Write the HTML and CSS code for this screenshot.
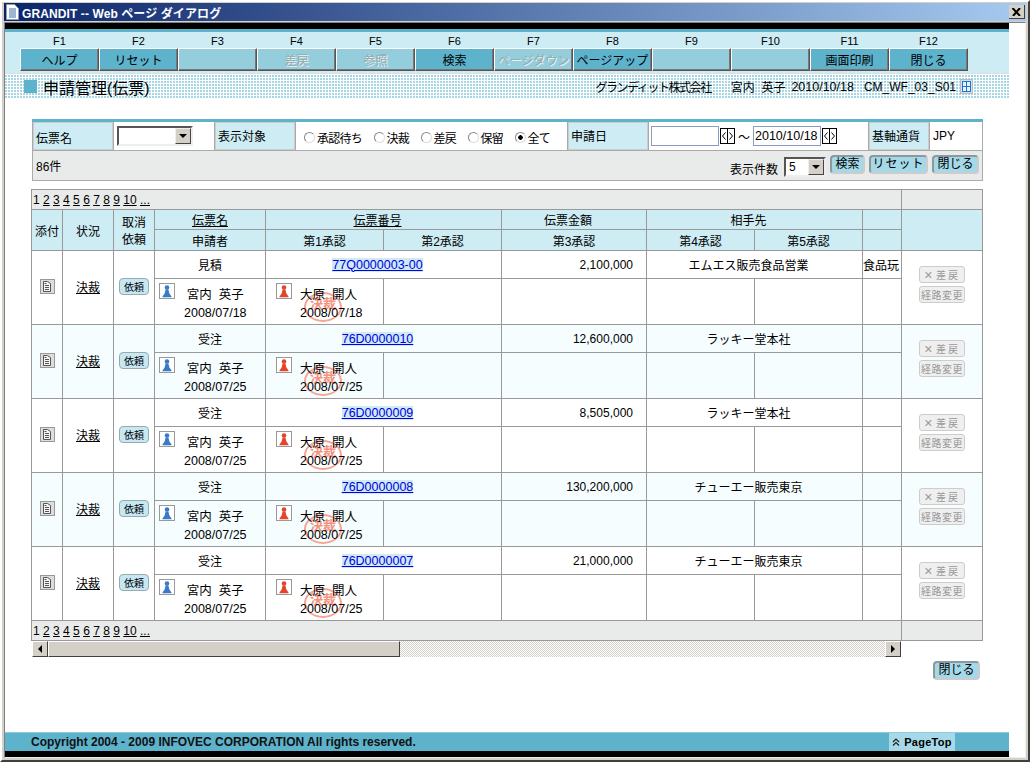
FILE: index.html
```html
<!DOCTYPE html>
<html>
<head>
<meta charset="utf-8">
<title>GRANDIT -- Web ページ ダイアログ</title>
<link rel="stylesheet" href="styles.css">
</head>
<body>
<svg class="defs" width="0" height="0">
  <symbol id="person" viewBox="0 0 16 16">
    <rect x=".5" y=".5" width="15" height="15" fill="#fff" stroke="#999"/>
    <circle cx="8" cy="4.500" r="2.300"/>
    <path d="M6.600 6.500h2.800l1 4 2.100 3v.7h-9v-.7l2.100-3z"/>
  </symbol>
  <symbol id="attach" viewBox="0 0 15 15">
    <rect x=".5" y=".5" width="14" height="14" fill="#ddd" stroke="#999"/>
    <path d="M3.500 2.500h4l3 2v8h-7z" fill="#f4f4f4" stroke="#555"/>
    <path d="M5 6.500h4M5 8.500h4M5 10.500h4M4.500 4.500h2" stroke="#555" fill="none"/>
  </symbol>
  <symbol id="spin" viewBox="0 0 15 16">
    <rect x=".5" y=".5" width="14" height="15" fill="#fff" stroke="#000"/>
    <path d="M7.500 0v16" stroke="#000"/>
    <path d="M5.500 4.500L2.500 8l3 3.500M9.500 4.500l3 3.500-3 3.500" fill="none" stroke="#000"/>
  </symbol>
</svg>

<div class="window">
  <div class="titlebar">
    <svg class="doc" width="13" height="16" viewBox="0 0 13 16">
      <path d="M.5.500h8l4 4v11H.5z" fill="#fff" stroke="#8a9ab8"/>
      <path d="M3 5h7M3 7h7M3 9h7M3 11h7M3 13h7" stroke="#3a6ea5"/>
    </svg>
    <span class="title">GRANDIT -- Web ページ ダイアログ</span>
    <span class="close-x">
      <svg width="9" height="8" viewBox="0 0 9 8"><path d="M.5 0l7.500 8M8 0L1 8" stroke="#000" stroke-width="2" fill="none"/></svg>
    </span>
  </div>

  <div class="client">
    <div class="page">
      <div class="strip"></div>

      <div class="fkeys">
        <div class="fkey"><span>F1</span><button>ヘルプ</button></div>
        <div class="fkey"><span>F2</span><button>リセット</button></div>
        <div class="fkey"><span>F3</span><button class="off"></button></div>
        <div class="fkey"><span>F4</span><button class="off">差戻</button></div>
        <div class="fkey"><span>F5</span><button class="off">参照</button></div>
        <div class="fkey"><span>F6</span><button>検索</button></div>
        <div class="fkey"><span>F7</span><button class="off">ページダウン</button></div>
        <div class="fkey"><span>F8</span><button>ページアップ</button></div>
        <div class="fkey"><span>F9</span><button class="off"></button></div>
        <div class="fkey"><span>F10</span><button class="off"></button></div>
        <div class="fkey"><span>F11</span><button>画面印刷</button></div>
        <div class="fkey"><span>F12</span><button>閉じる</button></div>
      </div>

      <div class="heading">
        <i class="mark"></i>
        <h1>申請管理(伝票)</h1>
        <div class="meta">
          <span class="co">グランディット株式会社</span>
          <span class="user">宮内&nbsp; 英子</span>
          <span class="day">2010/10/18</span>
          <span class="scr">CM_WF_03_S01</span>
          <span class="grid-ico"><i></i></span>
        </div>
      </div>

      <div class="main">
        <table class="filter">
          <colgroup>
            <col class="f1"><col class="f2"><col class="f3"><col class="f4">
            <col class="f5"><col class="f6"><col class="f7"><col class="f8">
          </colgroup>
          <tr class="cond">
            <th class="low">伝票名</th>
            <td><span class="combo wide"><b></b></span></td>
            <th>表示対象</th>
            <td>
              <div class="radios">
                <label><input type="radio" name="t">承認待ち</label>
                <label><input type="radio" name="t">決裁</label>
                <label><input type="radio" name="t">差戻</label>
                <label><input type="radio" name="t">保留</label>
                <label><input type="radio" name="t" checked>全て</label>
              </div>
            </td>
            <th>申請日</th>
            <td>
              <div class="dates">
                <input class="date" type="text">
                <svg class="spin"><use href="#spin"/></svg>
                <span class="tilde">～</span>
                <input class="date" type="text" value="2010/10/18">
                <svg class="spin"><use href="#spin"/></svg>
              </div>
            </td>
            <th>基軸通貨</th>
            <td class="cur">JPY</td>
          </tr>
          <tr class="acts">
            <td colspan="8">
              <div class="actrow">
                <span class="count">86件</span>
                <span class="lbl">表示件数</span>
                <span class="combo small">5<b></b></span>
                <button class="btn">検索</button>
                <button class="btn spaced">リセット</button>
                <button class="btn">閉じる</button>
              </div>
            </td>
          </tr>
        </table>

        <table class="list">
          <colgroup>
            <col class="c1"><col class="c2"><col class="c3"><col class="c4"><col class="c5"><col class="c6">
            <col class="c7"><col class="c8"><col class="c9"><col class="c10"><col class="c11">
          </colgroup>
          <tr class="pager">
            <td colspan="10">1 <a>2</a> <a>3</a> <a>4</a> <a>5</a> <a>6</a> <a>7</a> <a>8</a> <a>9</a> <a>10</a> <a>...</a></td>
            <td></td>
          </tr>
          <tr class="hd hd1">
            <th rowspan="2" class="left">添付</th>
            <th rowspan="2">状況</th>
            <th rowspan="2">取消<br>依頼</th>
            <th><a>伝票名</a></th>
            <th colspan="2" class="pr"><a>伝票番号</a></th>
            <th class="pr">伝票金額</th>
            <th colspan="2" class="pr">相手先</th>
            <th></th>
            <th rowspan="2"></th>
          </tr>
          <tr class="hd hd2">
            <th>申請者</th><th>第1承認</th><th>第2承認</th><th>第3承認</th><th>第4承認</th><th>第5承認</th><th></th>
          </tr>

          <tr class="r1">
            <td rowspan="2" class="mid"><svg class="att"><use href="#attach"/></svg></td>
            <td rowspan="2" class="mid"><a class="state">決裁</a></td>
            <td rowspan="2" class="mid"><button class="req">依頼</button></td>
            <td>見積</td>
            <td colspan="2" class="pr"><a class="no">77Q0000003-00</a></td>
            <td class="amt">2,100,000</td>
            <td colspan="2" class="pr">エムエス販売食品営業</td>
            <td class="clip">食品玩</td>
            <td rowspan="2" class="ops"><button class="gray"><i>×</i><u>差戻</u></button><button class="gray">経路変更</button></td>
          </tr>
          <tr class="r2">
            <td class="who"><div><svg class="blue"><use href="#person"/></svg><p>宮内&nbsp; 英子<br>2008/07/18</p></div></td>
            <td class="who ok"><div><svg class="red"><use href="#person"/></svg><em class="stamp">決裁</em><p>大原&nbsp; 開人<br>2008/07/18</p></div></td>
            <td></td><td></td><td></td><td></td><td></td>
          </tr>

          <tr class="r1 alt">
            <td rowspan="2" class="mid"><svg class="att"><use href="#attach"/></svg></td>
            <td rowspan="2" class="mid"><a class="state">決裁</a></td>
            <td rowspan="2" class="mid"><button class="req">依頼</button></td>
            <td>受注</td>
            <td colspan="2" class="pr"><a class="no">76D0000010</a></td>
            <td class="amt">12,600,000</td>
            <td colspan="2" class="pr">ラッキー堂本社</td>
            <td class="clip"></td>
            <td rowspan="2" class="ops"><button class="gray"><i>×</i><u>差戻</u></button><button class="gray">経路変更</button></td>
          </tr>
          <tr class="r2 alt">
            <td class="who"><div><svg class="blue"><use href="#person"/></svg><p>宮内&nbsp; 英子<br>2008/07/25</p></div></td>
            <td class="who ok"><div><svg class="red"><use href="#person"/></svg><em class="stamp">決裁</em><p>大原&nbsp; 開人<br>2008/07/25</p></div></td>
            <td></td><td></td><td></td><td></td><td></td>
          </tr>

          <tr class="r1">
            <td rowspan="2" class="mid"><svg class="att"><use href="#attach"/></svg></td>
            <td rowspan="2" class="mid"><a class="state">決裁</a></td>
            <td rowspan="2" class="mid"><button class="req">依頼</button></td>
            <td>受注</td>
            <td colspan="2" class="pr"><a class="no">76D0000009</a></td>
            <td class="amt">8,505,000</td>
            <td colspan="2" class="pr">ラッキー堂本社</td>
            <td class="clip"></td>
            <td rowspan="2" class="ops"><button class="gray"><i>×</i><u>差戻</u></button><button class="gray">経路変更</button></td>
          </tr>
          <tr class="r2">
            <td class="who"><div><svg class="blue"><use href="#person"/></svg><p>宮内&nbsp; 英子<br>2008/07/25</p></div></td>
            <td class="who ok"><div><svg class="red"><use href="#person"/></svg><em class="stamp">決裁</em><p>大原&nbsp; 開人<br>2008/07/25</p></div></td>
            <td></td><td></td><td></td><td></td><td></td>
          </tr>

          <tr class="r1 alt">
            <td rowspan="2" class="mid"><svg class="att"><use href="#attach"/></svg></td>
            <td rowspan="2" class="mid"><a class="state">決裁</a></td>
            <td rowspan="2" class="mid"><button class="req">依頼</button></td>
            <td>受注</td>
            <td colspan="2" class="pr"><a class="no">76D0000008</a></td>
            <td class="amt">130,200,000</td>
            <td colspan="2" class="pr">チューエー販売東京</td>
            <td class="clip"></td>
            <td rowspan="2" class="ops"><button class="gray"><i>×</i><u>差戻</u></button><button class="gray">経路変更</button></td>
          </tr>
          <tr class="r2 alt">
            <td class="who"><div><svg class="blue"><use href="#person"/></svg><p>宮内&nbsp; 英子<br>2008/07/25</p></div></td>
            <td class="who ok"><div><svg class="red"><use href="#person"/></svg><em class="stamp">決裁</em><p>大原&nbsp; 開人<br>2008/07/25</p></div></td>
            <td></td><td></td><td></td><td></td><td></td>
          </tr>

          <tr class="r1">
            <td rowspan="2" class="mid"><svg class="att"><use href="#attach"/></svg></td>
            <td rowspan="2" class="mid"><a class="state">決裁</a></td>
            <td rowspan="2" class="mid"><button class="req">依頼</button></td>
            <td>受注</td>
            <td colspan="2" class="pr"><a class="no">76D0000007</a></td>
            <td class="amt">21,000,000</td>
            <td colspan="2" class="pr">チューエー販売東京</td>
            <td class="clip"></td>
            <td rowspan="2" class="ops"><button class="gray"><i>×</i><u>差戻</u></button><button class="gray">経路変更</button></td>
          </tr>
          <tr class="r2">
            <td class="who"><div><svg class="blue"><use href="#person"/></svg><p>宮内&nbsp; 英子<br>2008/07/25</p></div></td>
            <td class="who ok"><div><svg class="red"><use href="#person"/></svg><em class="stamp">決裁</em><p>大原&nbsp; 開人<br>2008/07/25</p></div></td>
            <td></td><td></td><td></td><td></td><td></td>
          </tr>

          <tr class="pager">
            <td colspan="10">1 <a>2</a> <a>3</a> <a>4</a> <a>5</a> <a>6</a> <a>7</a> <a>8</a> <a>9</a> <a>10</a> <a>...</a></td>
            <td></td>
          </tr>
        </table>

        <div class="hscroll">
          <span class="arrow"><i class="lt"></i></span>
          <span class="thumb"></span>
          <span class="track"></span>
          <span class="arrow"><i class="rt"></i></span>
        </div>

        <div class="closerow"><button class="btn">閉じる</button></div>
      </div>

      <div class="foot">
        <span class="copy">Copyright 2004 - 2009 INFOVEC CORPORATION All rights reserved.</span>
        <span class="pagetop">
          <svg width="8" height="8" viewBox="0 0 8 8"><path d="M1 4l3-3 3 3M1 7.500l3-3 3 3" fill="none" stroke="#222" stroke-width="1.200"/></svg>
          PageTop
        </span>
      </div>
      <div class="strip"></div>
    </div>
    <div class="vbar"></div>
  </div>
</div>
</body>
</html>
```

FILE: styles.css
```css
html, body {
  margin: 0;
  padding: 0;
}
body {
  font: 12px "Liberation Sans", "Noto Sans CJK JP", sans-serif;
  color: #000;
  background: #d4d0c8;
}
.defs {
  position: absolute;
}
.window {
  box-sizing: border-box;
  width: 1030px;
  height: 762px;
  padding: 1px 2px 2px;
  border: 2px solid;
  border-color: #fff #404040 #404040 #fff;
  background: #d4d0c8;
  display: flex;
  flex-direction: column;
}
.titlebar {
  height: 18px;
  margin-bottom: 1px;
  padding-left: 2px;
  display: flex;
  align-items: center;
  background: linear-gradient(90deg, #0a246a, #a6caf0);
  flex: none;
}
.title {
  margin-left: 3px;
  color: #fff;
  font-weight: bold;
  font-size: 12px;
  letter-spacing: .1px;
}
.close-x {
  margin-left: auto;
  margin-right: 1px;
  width: 16px;
  height: 14px;
  display: flex;
  align-items: center;
  justify-content: center;
  background: #d4d0c8;
  border-right: 1px solid #404040;
  border-bottom: 1px solid #404040;
  box-sizing: border-box;
}
.client {
  flex: 1;
  min-height: 0;
  display: flex;
  border: 1px solid;
  border-color: #808080 #eee #eee #808080;
  background: #fff;
}
.page {
  width: 1004px;
  display: flex;
  flex-direction: column;
}
.vbar {
  flex: 1;
  background: #fff;
}
.strip {
  height: 6px;
  background: #000;
  flex: none;
}

/* function keys */
.fkeys {
  height: 41px;
  padding-left: 15px;
  display: flex;
  background: #ceecf4;
  border-top: 3px solid #5db2cc;
  border-bottom: 1px solid #ddd;
  flex: none;
}
.fkey {
  width: 79px;
  text-align: center;
}
.fkey span {
  display: block;
  height: 16px;
  line-height: 19px;
  font-size: 11px;
}
.fkey button {
  display: block;
  width: 79px;
  height: 23px;
  padding: 0;
  font: inherit;
  color: #000;
  background: #5db2cc;
  border: 1px solid;
  border-color: #fff #555 #555 #fff;
  box-shadow: inset -1px -1px 0 #777;
}
.fkey button.off {
  background: #94cddc;
  color: #9aa;
  text-shadow: 1px 1px 0 #e8f4f8;
}

/* heading */
.heading {
  height: 23px;
  margin-top: 1px;
  padding-left: 19px;
  display: flex;
  align-items: center;
  background: radial-gradient(circle at 1px 1px, #a5d6e3 .7px, transparent 1px) 0 0 / 3px 3px;
  flex: none;
}
.mark {
  width: 13px;
  height: 13px;
  background: #5db2cc;
}
.heading h1 {
  margin: 0 0 0 6px;
  font-size: 16px;
  font-weight: normal;
}
.meta {
  margin-left: auto;
  margin-right: 36px;
  display: flex;
  align-items: center;
}
.co {
  letter-spacing: -1.450px;
}
.user {
  margin-left: 20px;
}
.day {
  margin-left: 6px;
  font-size: 12.500px;
}
.scr {
  margin-left: 10px;
}
.grid-ico {
  margin-left: 4px;
  width: 13px;
  height: 15px;
  display: flex;
  align-items: center;
  justify-content: center;
  background: #cfe2f4;
  border: 1px solid #bbb;
  box-sizing: border-box;
}
.grid-ico i {
  width: 9px;
  height: 11px;
  background:
    linear-gradient(#1f74d0, #1f74d0) 0 4px / 7px 1px no-repeat,
    linear-gradient(#1f74d0, #1f74d0) 3px 0 / 1px 9px no-repeat,
    #e8f2fb;
  border: 1px solid #1f74d0;
  box-sizing: border-box;
}

/* search panel */
.main {
  flex: 1;
  padding: 21px 0 0 27px;
}
.filter {
  width: 950px;
  table-layout: fixed;
  border-collapse: collapse;
  border-top: 3px solid #5db2cc;
}
.f1, .f3, .f5 { width: 81px; }
.f2 { width: 101px; }
.f4 { width: 272px; }
.f6 { width: 220px; }
.f7 { width: 61px; }
.f8 { width: 53px; }
.filter th, .filter td {
  padding: 0;
  border: 1px solid #aaa;
}
.filter tr.cond {
  height: 27px;
}
.filter th {
  height: 21px;
  background: #ceecf4;
  box-shadow: inset 0 0 0 1px #ccc;
  font-weight: normal;
  text-align: left;
  vertical-align: top;
  padding: 5px 0 0 3px;
}
.filter th.low {
  padding-top: 7px;
}
.combo {
  display: inline-flex;
  box-sizing: border-box;
  height: 20px;
  align-items: center;
  padding-left: 3px;
  border: 2px solid;
  border-color: #555 #eee #eee #555;
  background: #fff;
  vertical-align: middle;
}
.combo b {
  margin-left: auto;
  width: 16px;
  height: 16px;
  box-sizing: border-box;
  background: #d4d0c8;
  border: 1px solid;
  border-color: #eee #444 #444 #eee;
  position: relative;
}
.combo b::after {
  content: "";
  position: absolute;
  left: 3px;
  top: 5px;
  border: 4px solid transparent;
  border-top: 4px solid #000;
  border-bottom: 0;
}
.combo.wide {
  width: 76px;
  margin-left: 3px;
}
.combo.small {
  width: 42px;
  margin-left: 6px;
}
.radios {
  padding: 3px 0 0 7px;
  display: flex;
  gap: 10.500px;
  white-space: nowrap;
  letter-spacing: -.75px;
}
.radios label {
  display: flex;
  align-items: center;
}
.radios input {
  appearance: none;
  width: 11px;
  height: 11px;
  margin: 0 2px 0 1px;
  border: 1px solid #888;
  border-right-color: #ddd;
  border-bottom-color: #ddd;
  border-radius: 50%;
  background: #fff;
}
.radios input:checked {
  background: radial-gradient(circle, #000 2px, #fff 2.500px);
}
.dates {
  padding-left: 2px;
  display: flex;
  align-items: center;
}
.date {
  box-sizing: border-box;
  width: 68px;
  height: 20px;
  padding: 0 0 0 1px;
  font: inherit;
  font-size: 12.500px;
  border: 1px solid #8a9ac0;
}
.spin {
  margin-left: 1px;
  width: 15px;
  height: 16px;
}
.tilde {
  width: 18px;
  text-align: center;
}
.cur {
  padding-left: 3px !important;
}
.acts td {
  height: 29px;
  background: #e9ebea;
  padding: 0 3px 0 3px;
}
.actrow {
  display: flex;
  align-items: center;
}
.count {
  margin-right: auto;
}
.lbl {
  padding-top: 5px;
}
.actrow .combo {
  margin-top: 2px;
}
.btn {
  box-sizing: border-box;
  height: 19px;
  margin-left: 4px;
  padding: 0 3.500px;
  font: inherit;
  line-height: 15px;
  color: #000;
  background: #a5d9e8;
  border: 2px solid #8a9aa0;
  border-right-color: #ccc;
  border-bottom-color: #ccc;
  border-radius: 4px;
}
.actrow .btn {
  margin-bottom: 3px;
}
.btn.spaced {
  letter-spacing: 1px;
  padding: 0 1.500px;
}

/* list */
.list {
  width: 951px;
  margin: 8px 0 0 -1px;
  table-layout: fixed;
  border-collapse: collapse;
}
.c1 { width: 31px; }
.c2 { width: 51px; }
.c3 { width: 41px; }
.c4 { width: 111px; }
.c5, .c6 { width: 118px; }
.c7 { width: 145px; }
.c8, .c9 { width: 108px; }
.c10 { width: 39px; }
.c11 { width: 81px; }
.list td, .list th {
  padding: 0;
  border: 1px solid #999;
  font-weight: normal;
  text-align: center;
}
.pager {
  height: 20px;
}
.pager td {
  background: #e9ebea;
  text-align: left !important;
  padding-left: 1px !important;
}
.pager a, .list th a, .state {
  text-decoration: underline;
}
.hd th {
  background: #ceecf4;
}
.hd1 { height: 20px; }
.hd2 { height: 21px; }
.hd th.left {
  text-align: left;
  padding-left: 3px;
}
.list .pr {
  padding-right: 12px;
}
.r1 { height: 28px; }
.r2 { height: 46px; }
.alt td {
  background: #f5fdff;
}
.mid {
  vertical-align: middle;
}
.att {
  width: 15px;
  height: 15px;
  display: block;
  margin: 0 auto 2px;
}
.state {
  display: block;
  padding-bottom: 3px;
}
.req {
  display: block;
  margin: 0 auto 3px;
  width: 30px;
  height: 17px;
  padding: 0;
  font: inherit;
  font-size: 10px;
  color: #000;
  background: #c6e8f4;
  border: 1px solid #9aa;
  border-radius: 4px;
}
.no {
  color: #0000e0;
  background: #cfe9f5;
  text-decoration: underline;
  font-size: 12.500px;
}
.list .amt {
  text-align: right;
  padding-right: 13px;
}
.clip {
  text-align: left !important;
  white-space: nowrap;
  overflow: hidden;
}
.who {
  vertical-align: top;
  text-align: left !important;
}
.who div {
  position: relative;
  padding: 4px 0 0 4px;
  display: flex;
  align-items: flex-start;
}
.ok div {
  padding-left: 10px;
}
.who svg {
  width: 16px;
  height: 16px;
  flex: none;
}
.blue { fill: #3a78c8; }
.red { fill: #e2452a; }
.who p {
  position: relative;
  margin: 3px 0 0 9px;
  font-size: 12.500px;
  line-height: 18px;
  text-align: center;
  white-space: nowrap;
}
.ok p {
  margin-left: 8px;
  text-align: left;
}
.stamp {
  position: absolute;
  left: 38px;
  top: 13px;
  box-sizing: border-box;
  width: 38px;
  height: 30px;
  padding-top: 3px;
  border: 2px solid #f6a493;
  border-radius: 50%;
  color: #f4927e;
  font-style: normal;
  font-weight: bold;
  font-size: 13px;
  line-height: 14px;
  text-align: center;
}
.ops {
  padding-bottom: 4px !important;
}
.gray {
  display: block;
  box-sizing: border-box;
  width: 46px;
  height: 17px;
  margin: 0 auto 3px;
  padding: 0;
  font: inherit;
  font-size: 10px;
  letter-spacing: .5px;
  color: #999;
  background: #efefef;
  border: 1px solid #ccc;
  border-radius: 3px;
}
.gray i {
  font-style: normal;
  font-size: 14px;
  line-height: 12px;
  margin-right: 3px;
  vertical-align: -1px;
}
.gray u {
  text-decoration: none;
  letter-spacing: 2px;
}

/* bottom */
.hscroll {
  width: 869px;
  height: 16px;
  display: flex;
}
.arrow {
  box-sizing: border-box;
  width: 16px;
  height: 16px;
  display: flex;
  align-items: center;
  justify-content: center;
  background: #d4d0c8;
  border: 1px solid;
  border-color: #fff #404040 #404040 #fff;
}
.arrow i {
  border: 4px solid transparent;
}
.arrow .lt {
  border-right-color: #000;
  border-left: 0;
}
.arrow .rt {
  border-left-color: #000;
  border-right: 0;
}
.thumb {
  box-sizing: border-box;
  width: 352px;
  background: #d4d0c8;
  border: 1px solid;
  border-color: #fff #404040 #404040 #fff;
}
.track {
  flex: 1;
  background: repeating-conic-gradient(#d4d0c8 0 25%, #fff 0 50%) 0 0 / 2px 2px;
}
.closerow {
  width: 948px;
  margin-top: 4px;
  display: flex;
  justify-content: flex-end;
}
.foot {
  height: 19px;
  padding-left: 26px;
  display: flex;
  align-items: center;
  background: #5db2cc;
  border-top: 1px solid #8fcbdc;
  box-sizing: border-box;
  flex: none;
}
.copy {
  font-weight: bold;
  color: #111;
}
.pagetop {
  margin-left: auto;
  margin-right: 54px;
  width: 66px;
  height: 18px;
  display: flex;
  align-items: center;
  justify-content: center;
  gap: 4px;
  background: #a5d9e8;
  font-size: 11px;
  font-weight: bold;
  letter-spacing: .3px;
}
```
